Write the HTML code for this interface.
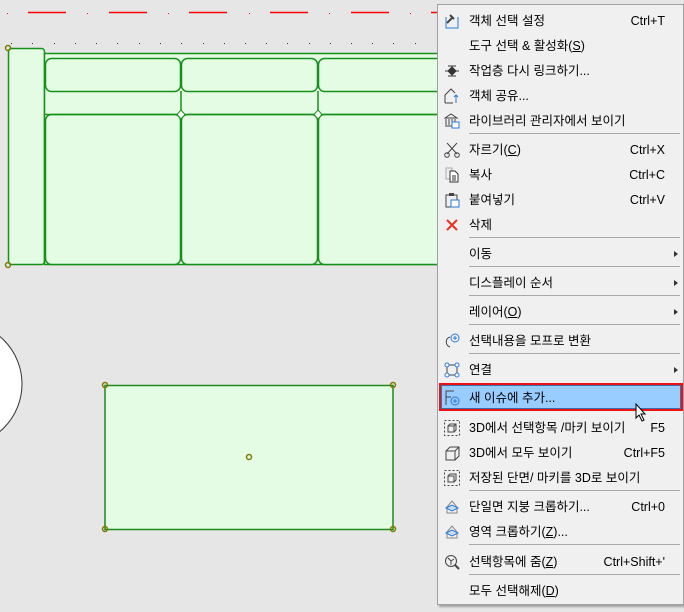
<!DOCTYPE html>
<html><head><meta charset="utf-8"><style>
body{margin:0;width:684px;height:612px;overflow:hidden;background:#e6e6e6;position:relative;font-family:"Liberation Sans","Noto Sans CJK KR",sans-serif;}
#menu{position:absolute;left:437px;top:4px;width:245px;height:599px;background:#f0f0f0;border:1px solid #a0a0a0;box-shadow:2px 2px 2px rgba(0,0,0,0.3);}
.it{position:absolute;left:0;width:245px;height:24px;font-size:12.5px;color:#000;line-height:24px;}
.it .t{position:absolute;left:31px;}
.it .k{position:absolute;right:18px;}
.it .a{position:absolute;right:5px;top:9px;width:0;height:0;border-left:4px solid #333;border-top:3.5px solid transparent;border-bottom:3.5px solid transparent;}
.sep{position:absolute;left:31px;right:3px;height:1px;background:#a8a8a8;}
.ic{position:absolute;left:6px;top:4px;}
u{text-decoration:underline;}
#hl{position:absolute;left:1px;top:378px;width:240px;height:24px;border:2px solid #ee1111;}
#hl div{position:absolute;left:0;top:0;right:0;bottom:0;background:#99ccff;border:1px solid #3d6fb0;}
</style></head><body>
<svg width="437" height="612" style="position:absolute;left:0;top:0">
<g stroke="#f00" stroke-width="1.5">
<line x1="28" y1="12.5" x2="66" y2="12.5"/><line x1="109" y1="12.5" x2="147" y2="12.5"/><line x1="189" y1="12.5" x2="227" y2="12.5"/><line x1="270" y1="12.5" x2="308" y2="12.5"/><line x1="351" y1="12.5" x2="389" y2="12.5"/><line x1="431" y1="12.5" x2="437" y2="12.5"/>
</g>
<g fill="#f00"><rect x="7" y="13" width="1" height="1"/><rect x="87" y="13" width="1" height="1"/><rect x="168" y="13" width="1" height="1"/><rect x="249" y="13" width="1" height="1"/><rect x="329" y="13" width="1" height="1"/><rect x="410" y="13" width="1" height="1"/></g>
<g fill="#333"><rect x="11" y="43" width="1" height="1"/><rect x="32" y="43" width="1" height="1"/><rect x="54" y="43" width="1" height="1"/><rect x="75" y="43" width="1" height="1"/><rect x="96" y="43" width="1" height="1"/><rect x="117" y="43" width="1" height="1"/><rect x="139" y="43" width="1" height="1"/><rect x="160" y="43" width="1" height="1"/><rect x="181" y="43" width="1" height="1"/><rect x="203" y="43" width="1" height="1"/><rect x="224" y="43" width="1" height="1"/><rect x="245" y="43" width="1" height="1"/><rect x="266" y="43" width="1" height="1"/><rect x="287" y="43" width="1" height="1"/><rect x="309" y="43" width="1" height="1"/><rect x="330" y="43" width="1" height="1"/><rect x="351" y="43" width="1" height="1"/><rect x="372" y="43" width="1" height="1"/><rect x="393" y="43" width="1" height="1"/><rect x="415" y="43" width="1" height="1"/></g>
<g fill="#e4fce4" stroke="#17901a" stroke-width="1.5">
<rect x="8.5" y="48.5" width="36" height="216" rx="3"/>
<rect x="44.5" y="53.5" width="400" height="211"/>
<rect x="45.5" y="58.5" width="135" height="33" rx="6"/>
<rect x="181.5" y="58.5" width="136" height="33" rx="6"/>
<rect x="318.5" y="58.5" width="130" height="33" rx="6"/>
<rect x="45.5" y="114.5" width="135" height="150" rx="6"/>
<rect x="181.5" y="114.5" width="136" height="150" rx="6"/>
<rect x="318.5" y="114.5" width="130" height="150" rx="6"/>
<line x1="45" y1="114.5" x2="437" y2="114.5"/>
<line x1="181" y1="91" x2="181" y2="115"/><line x1="318" y1="91" x2="318" y2="115"/>
<path d="M181 110l4 4.5-4 4.5-4-4.5zM318 110l4 4.5-4 4.5-4-4.5z" fill="#fff" stroke-width="1"/>
</g>
<circle cx="-40" cy="384" r="62" fill="#fff" stroke="#333" stroke-width="1"/>
<rect x="105" y="385.5" width="288" height="144" fill="#e4fce4" stroke="#1c8a1c" stroke-width="1.5"/>
<g fill="none" stroke="#7a7a00" stroke-width="1.5">
<circle cx="8" cy="48" r="2.5"/><circle cx="8" cy="265" r="2.5"/>
<circle cx="105" cy="385" r="2.5"/><circle cx="393" cy="385" r="2.5"/><circle cx="105" cy="529" r="2.5"/><circle cx="393" cy="529" r="2.5"/><circle cx="249" cy="457" r="2.5"/>
</g>
</svg>
<div id="menu">
<div id="hl"><div></div></div>
<div class="it" style="top:4px"><svg class="ic" width="16" height="16"><path d="M2 4v11h12V4" fill="none" stroke="#2a7ad8"/><path d="M3 10l5-5M6 2l4 4" stroke="#444" stroke-width="2"/></svg><span class="t">객체 선택 설정</span><span class="k">Ctrl+T</span></div>
<div class="it" style="top:29px"><span class="t">도구 선택 &amp; 활성화(<u>S</u>)</span></div>
<div class="it" style="top:54px"><svg class="ic" width="16" height="16"><path d="M1 8h14M4 3h8M4 13h8M8 4l-3 3h6zM8 12l-3-3h6z" stroke="#333" fill="#333"/></svg><span class="t">작업층 다시 링크하기...</span></div>
<div class="it" style="top:79px"><svg class="ic" width="16" height="16"><path d="M1 15V7l6-6 4 4M1 15h8" fill="none" stroke="#444"/><path d="M12 15V7M10 9l2-2 2 2" fill="none" stroke="#2a7ad8"/></svg><span class="t">객체 공유...</span></div>
<div class="it" style="top:104px"><svg class="ic" width="16" height="16"><path d="M1 5l6-4 6 4zM2 6v6M5 6v6M8 6v6M11 6v6M1 13h7" stroke="#444" fill="none"/><rect x="8" y="9" width="7" height="6" fill="#fff" stroke="#2a7ad8"/></svg><span class="t">라이브러리 관리자에서 보이기</span></div>
<div class="sep" style="top:128px"></div>
<div class="it" style="top:133px"><svg class="ic" width="16" height="16"><path d="M3 1l10 11M13 1L3 12" stroke="#444"/><circle cx="3" cy="13" r="2.3" fill="none" stroke="#444"/><circle cx="13" cy="13" r="2.3" fill="none" stroke="#444"/></svg><span class="t">자르기(<u>C</u>)</span><span class="k">Ctrl+X</span></div>
<div class="it" style="top:158px"><svg class="ic" width="16" height="16"><path d="M2 1h6v11H2z" fill="none" stroke="#aaa"/><path d="M6 4h5l3 3v8H6z" fill="#fff" stroke="#333"/><path d="M8 9h4M8 11h4M8 13h4" stroke="#333"/></svg><span class="t">복사</span><span class="k">Ctrl+C</span></div>
<div class="it" style="top:183px"><svg class="ic" width="16" height="16"><path d="M2 3h11v12H2z" fill="none" stroke="#444"/><rect x="5" y="1" width="5" height="3" fill="#444"/><rect x="7" y="8" width="8" height="7" fill="#fff" stroke="#2a7ad8"/></svg><span class="t">붙여넣기</span><span class="k">Ctrl+V</span></div>
<div class="it" style="top:208px"><svg class="ic" width="16" height="16"><path d="M3 3l10 10M13 3L3 13" stroke="#e63222" stroke-width="2"/></svg><span class="t">삭제</span></div>
<div class="sep" style="top:232px"></div>
<div class="it" style="top:237px"><span class="t">이동</span><span class="a"></span></div>
<div class="sep" style="top:261px"></div>
<div class="it" style="top:266px"><span class="t">디스플레이 순서</span><span class="a"></span></div>
<div class="sep" style="top:290px"></div>
<div class="it" style="top:295px"><span class="t">레이어(<u>O</u>)</span><span class="a"></span></div>
<div class="sep" style="top:319px"></div>
<div class="it" style="top:324px"><svg class="ic" width="16" height="16"><path d="M6 4C2 5 1 10 4 13l2 1" fill="none" stroke="#444"/><circle cx="11" cy="5" r="4" fill="none" stroke="#2a7ad8"/><path d="M9 5h4M11 3v4" stroke="#2a7ad8"/></svg><span class="t">선택내용을 모프로 변환</span></div>
<div class="sep" style="top:348px"></div>
<div class="it" style="top:353px"><svg class="ic" width="16" height="16"><path d="M3 3h10M3 13h10M3 3v10M13 3v10" stroke="#444"/><g fill="#fff" stroke="#2a7ad8"><circle cx="3" cy="3" r="2"/><circle cx="13" cy="3" r="2"/><circle cx="3" cy="13" r="2"/><circle cx="13" cy="13" r="2"/></g></svg><span class="t">연결</span><span class="a"></span></div>
<div class="it" style="top:381px"><svg class="ic" width="16" height="16"><path d="M2 15V1h8M2 7h5" fill="none" stroke="#444"/><circle cx="11" cy="11" r="4" fill="none" stroke="#2a7ad8"/><path d="M9 11h4M11 9v4" stroke="#2a7ad8"/></svg><span class="t">새 이슈에 추가...</span></div>
<svg style="position:absolute;left:197px;top:398px" width="14" height="20"><path d="M1 1v14l3-3 3 6 2-1-3-6h4z" fill="#fff" stroke="#000"/></svg>
<div class="it" style="top:411px"><svg class="ic" width="16" height="16"><rect x="0.5" y="0.5" width="15" height="15" fill="none" stroke="#444" stroke-dasharray="2 2"/><path d="M4 6h6v6H4zM4 6l2-2h6v6l-2 2M10 6l2-2" fill="none" stroke="#444"/></svg><span class="t">3D에서 선택항목 /마키 보이기</span><span class="k">F5</span></div>
<div class="it" style="top:436px"><svg class="ic" width="16" height="16"><path d="M2 6h9v9H2zM2 6l4-4h9v9l-4 4M11 6l4-4" fill="none" stroke="#444"/></svg><span class="t">3D에서 모두 보이기</span><span class="k">Ctrl+F5</span></div>
<div class="it" style="top:461px"><svg class="ic" width="16" height="16"><rect x="0.5" y="0.5" width="15" height="15" fill="none" stroke="#444" stroke-dasharray="2 2"/><path d="M4 6h6v6H4zM4 6l2-2h6v6l-2 2" fill="none" stroke="#444"/></svg><span class="t">저장된 단면/ 마키를 3D로 보이기</span></div>
<div class="sep" style="top:485px"></div>
<div class="it" style="top:490px"><svg class="ic" width="16" height="16"><path d="M3 8l5-6 5 6v6H3z" fill="none" stroke="#888"/><path d="M2 9l6-3 6 3-6 3z" fill="#cde" stroke="#2a7ad8"/></svg><span class="t">단일면 지붕 크롭하기...</span><span class="k">Ctrl+0</span></div>
<div class="it" style="top:515px"><svg class="ic" width="16" height="16"><path d="M3 8l5-6 5 6v6H3z" fill="none" stroke="#888"/><path d="M2 9l6-3 6 3-6 3z" fill="#cde" stroke="#2a7ad8"/></svg><span class="t">영역 크롭하기(<u>Z</u>)...</span></div>
<div class="sep" style="top:539px"></div>
<div class="it" style="top:545px"><svg class="ic" width="16" height="16"><circle cx="7" cy="7" r="5.5" fill="none" stroke="#444"/><path d="M11 11l4 4" stroke="#444" stroke-width="2"/><path d="M7 7L4 4M7 7l3-2M7 7v4" stroke="#444"/></svg><span class="t">선택항목에 줌(<u>Z</u>)</span><span class="k">Ctrl+Shift+'</span></div>
<div class="sep" style="top:569px"></div>
<div class="it" style="top:574px"><span class="t">모두 선택해제(<u>D</u>)</span></div>
</div>
</body></html>
